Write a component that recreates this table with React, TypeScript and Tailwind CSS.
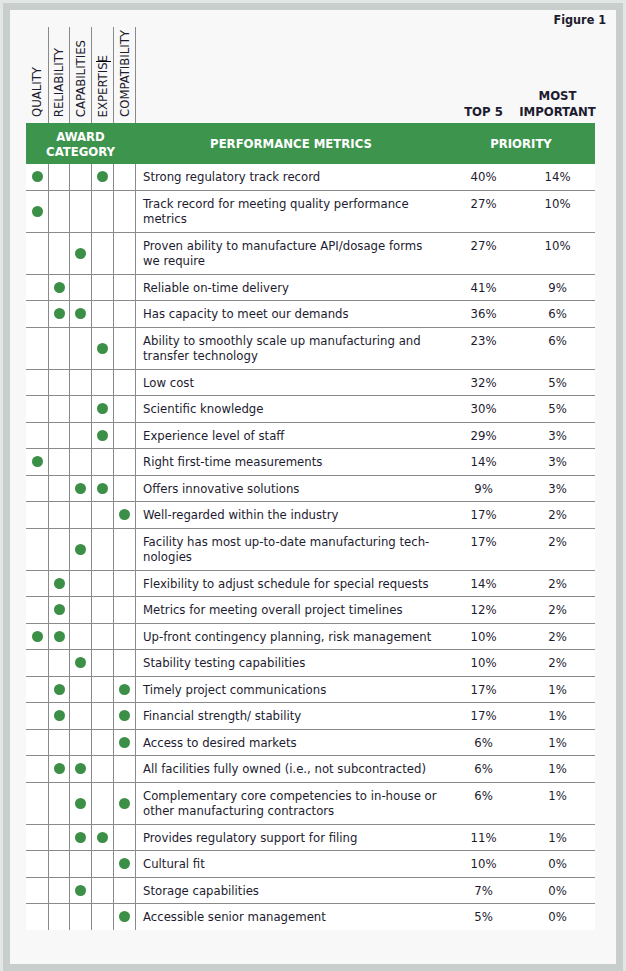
import React from "react";

const font = { fontFamily: '"Liberation Sans Narrow", "DejaVu Sans Condensed", Roboto, sans-serif' };

type Row = { dots: number[]; lines: string[]; top: string; most: string };

// columns: 0 quality, 1 reliability, 2 capabilities, 3 expertise, 4 compatibility
const rows: Row[] = [
  { dots: [0, 3], lines: ["Strong regulatory track record"], top: "40%", most: "14%" },
  { dots: [0], lines: ["Track record for meeting quality performance", "metrics"], top: "27%", most: "10%" },
  { dots: [2], lines: ["Proven ability to manufacture API/dosage forms", "we require"], top: "27%", most: "10%" },
  { dots: [1], lines: ["Reliable on-time delivery"], top: "41%", most: "9%" },
  { dots: [1, 2], lines: ["Has capacity to meet our demands"], top: "36%", most: "6%" },
  { dots: [3], lines: ["Ability to smoothly scale up manufacturing and", "transfer technology"], top: "23%", most: "6%" },
  { dots: [], lines: ["Low cost"], top: "32%", most: "5%" },
  { dots: [3], lines: ["Scientific knowledge"], top: "30%", most: "5%" },
  { dots: [3], lines: ["Experience level of staff"], top: "29%", most: "3%" },
  { dots: [0], lines: ["Right first-time measurements"], top: "14%", most: "3%" },
  { dots: [2, 3], lines: ["Offers innovative solutions"], top: "9%", most: "3%" },
  { dots: [4], lines: ["Well-regarded within the industry"], top: "17%", most: "2%" },
  { dots: [2], lines: ["Facility has most up-to-date manufacturing tech-", "nologies"], top: "17%", most: "2%" },
  { dots: [1], lines: ["Flexibility to adjust schedule for special requests"], top: "14%", most: "2%" },
  { dots: [1], lines: ["Metrics for meeting overall project timelines"], top: "12%", most: "2%" },
  { dots: [0, 1], lines: ["Up-front contingency planning, risk management"], top: "10%", most: "2%" },
  { dots: [2], lines: ["Stability testing capabilities"], top: "10%", most: "2%" },
  { dots: [1, 4], lines: ["Timely project communications"], top: "17%", most: "1%" },
  { dots: [1, 4], lines: ["Financial strength/ stability"], top: "17%", most: "1%" },
  { dots: [4], lines: ["Access to desired markets"], top: "6%", most: "1%" },
  { dots: [1, 2], lines: ["All facilities fully owned (i.e., not subcontracted)"], top: "6%", most: "1%" },
  { dots: [2, 4], lines: ["Complementary core competencies to in-house or", "other manufacturing contractors"], top: "6%", most: "1%" },
  { dots: [2, 3], lines: ["Provides regulatory support for filing"], top: "11%", most: "1%" },
  { dots: [4], lines: ["Cultural fit"], top: "10%", most: "0%" },
  { dots: [2], lines: ["Storage capabilities"], top: "7%", most: "0%" },
  { dots: [4], lines: ["Accessible senior management"], top: "5%", most: "0%" },
];

const categories = ["QUALITY", "RELIABILITY", "CAPABILITIES", "EXPERTISE", "COMPATIBILITY"];
const colWidths = ["w-[22px]", "w-[21px]", "w-[22px]", "w-[22px]", "w-[22px]"];

function Dot() {
  return <span className="block w-[11px] h-[11px] rounded-full bg-[#3b8f46]" />;
}

export default function App() {
  return (
    <div className="min-h-screen w-full bg-[#e2e6e4] p-[3px]" style={font}>
      <div className="bg-[#c7cecb] p-[7px]">
        <div className="bg-[#f7f8f7] pl-[16px] pr-[10px] pt-[3px] pb-[34px] text-[#1d1b2f]">
          <div className="flex justify-end h-[14px] text-[12.5px] font-bold leading-[14px]">Figure 1</div>

          <div className="mr-[11px]">
            {/* column headings */}
            <div className="flex h-[96px]">
              {categories.map((c, i) => (
                <div
                  key={c}
                  className={`${colWidths[i]} relative flex items-end justify-center pb-[6px] ${i > 0 ? "border-l border-[#8a8a8a]" : ""}`}
                >
                  <span className="[writing-mode:vertical-rl] rotate-180 text-[13px] leading-[14px] whitespace-nowrap">{c}</span>
                  {c === "EXPERTISE" && <span className="absolute left-[4px] top-[34px] w-[15px] h-px bg-black" />}
                </div>
              ))}
              <div className="flex-1 border-l border-[#8a8a8a]" />
              <div className="w-[73px] flex items-end justify-center pb-[3px] text-[13px] font-bold leading-[16px]">TOP 5</div>
              <div className="w-[75px] flex items-end justify-center pb-[3px] text-[13px] font-bold leading-[16px] text-center">
                MOST
                <br />
                IMPORTANT
              </div>
            </div>

            {/* green band */}
            <div className="flex h-[41px] bg-[#3d944c] text-white font-bold text-[13px] leading-[15px]">
              <div className="w-[109px] flex items-center justify-center text-center">
                AWARD
                <br />
                CATEGORY
              </div>
              <div className="flex-1 flex items-center justify-center">PERFORMANCE METRICS</div>
              <div className="w-[148px] flex items-center justify-center">PRIORITY</div>
            </div>

            {/* body */}
            <div className="bg-white">
              {rows.map((r, idx) => (
                <div
                  key={idx}
                  className={`flex text-[13px] leading-[15.5px] ${idx < rows.length - 1 ? "border-b border-[#8a8a8a]" : ""}`}
                >
                  {categories.map((c, i) => (
                    <div
                      key={c}
                      className={`${colWidths[i]} flex items-center justify-center ${i > 0 ? "border-l border-[#8a8a8a]" : ""}`}
                    >
                      {r.dots.includes(i) && <Dot />}
                    </div>
                  ))}
                  <div className="flex-1 border-l border-[#8a8a8a] pl-[7px] py-[5px]">
                    {r.lines.map((l, k) => (
                      <div key={k} className="whitespace-nowrap">
                        {l}
                      </div>
                    ))}
                  </div>
                  <div className="w-[73px] py-[5px] text-center">{r.top}</div>
                  <div className="w-[75px] py-[5px] text-center">{r.most}</div>
                </div>
              ))}
            </div>
          </div>
        </div>
      </div>
    </div>
  );
}
